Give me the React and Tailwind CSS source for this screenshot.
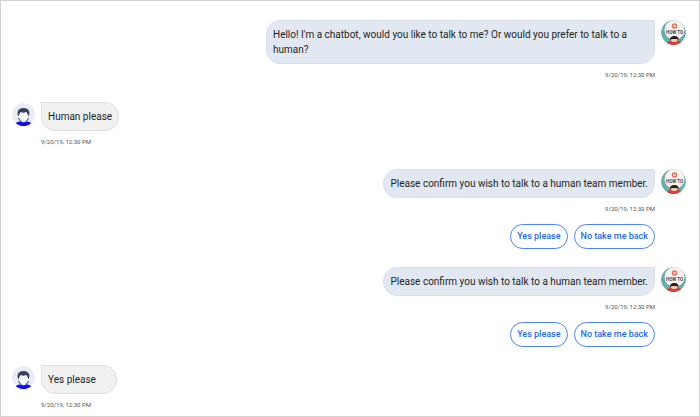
import React from 'react';

const TIME = '9/20/19, 12:30 PM';

const MESSAGES = [
  { id: 1, from: 'bot', text: "Hello! I'm a chatbot, would you like to talk to me? Or would you prefer to talk to a human?" },
  { id: 2, from: 'user', text: 'Human please' },
  { id: 3, from: 'bot', text: 'Please confirm you wish to talk to a human team member.', replies: ['Yes please', 'No take me back'] },
  { id: 4, from: 'bot', text: 'Please confirm you wish to talk to a human team member.', replies: ['Yes please', 'No take me back'] },
  { id: 5, from: 'user', text: 'Yes please' },
];

const BotAvatar = () => (
  <svg viewBox="0 0 50 50" className="h-[25px] w-[25px] shrink-0 rounded-full" role="img" aria-label="Chatbot">
    <circle cx="25" cy="25" r="25" fill="#67afac" />
    <circle cx="27" cy="20" r="20" fill="#f6f3ef" />
    <circle cx="27" cy="12" r="4" fill="#f9d9d0" stroke="#e8705f" strokeWidth="3" />
    <text x="27" y="28" textAnchor="middle" fontSize="9" fontWeight="700" fontFamily="Roboto, sans-serif" fill="#44475c">HOW TO</text>
    {/* head and shoulders */}
    <path d="M11 46c2-4 8-5 15-5s14 1 16 5c-4 3-10 4-17 4s-11-1-14-4z" fill="#d93a3a" />
    <path d="M20 38h13v3c-2 4-11 4-13 0z" fill="#f3c9b0" />
    <path d="M18 41c-1-6 3-9 9-9s9 3 8 9l-3-3H21z" fill="#2b1a1c" />
  </svg>
);

const UserAvatar = () => (
  <svg viewBox="0 0 46 46" className="mt-px h-[23px] w-[23px] shrink-0 rounded-full" role="img" aria-label="User">
    <circle cx="23" cy="23" r="23" fill="#e9ecf4" />
    <path d="M14 24c0 7 4 12 9 12s9-5 9-12l-3-6H17z" fill="#f6f7fb" />
    <path d="M12 25c-3-9 2-15 11-15s14 6 11 15l-2 1c0-4-2-7-4-8-4 2-7 2-10 0-2 1-4 4-4 8z" fill="#35415f" />
    <path d="M13 30c1 3 3 5 5 7M33 30c-1 3-3 5-5 7" fill="none" stroke="#35415f" strokeWidth="2" />
    <path d="M7 41c3-3 6-4 11-4 2 2 8 2 10 0 5 0 8 1 11 4-4 4-10 5-16 5S11 45 7 41z" fill="#0b0bf5" />
  </svg>
);

const Message = ({ message }) => {
  const isBot = message.from === 'bot';
  return (
    <li className={`flex items-start gap-1.5 ${isBot ? 'justify-end' : ''}`}>
      {!isBot && <UserAvatar />}
      <div className={`flex max-w-[389px] flex-col ${isBot ? 'items-end' : 'items-start'}`}>
        <p
          className={`min-w-[76px] rounded-[14px] border px-[6px] py-[6px] text-[10px] leading-[15px] text-[#1d1f22] ${
            isBot ? 'rounded-tr-none border-[#d9dfe6] bg-[#e1e8f2]' : 'rounded-tl-none border-[#dedede] bg-[#f1f1f1]'
          }`}
        >
          {message.text}
        </p>
        <time className="mt-0.5 text-[6px] leading-[18px] text-[#555555]">{TIME}</time>
        {message.replies && (
          <div className="mt-1.5 flex gap-1.5">
            {message.replies.map((reply) => (
              <button
                key={reply}
                type="button"
                className="rounded-full border border-[#4a86f7] px-[6px] py-[4px] text-[9px] leading-[15px] font-medium text-[#1f6bf0]"
              >
                {reply}
              </button>
            ))}
          </div>
        )}
      </div>
      {isBot && <BotAvatar />}
    </li>
  );
};

export default function App() {
  return (
    <main className="min-h-screen overflow-hidden border border-[#d2d2d2] bg-white font-['Roboto',sans-serif]">
      <ul className="flex flex-col gap-[18px] pt-[19px] pr-[13px] pl-[11px]">
        {MESSAGES.map((message) => (
          <Message key={message.id} message={message} />
        ))}
      </ul>
    </main>
  );
}
